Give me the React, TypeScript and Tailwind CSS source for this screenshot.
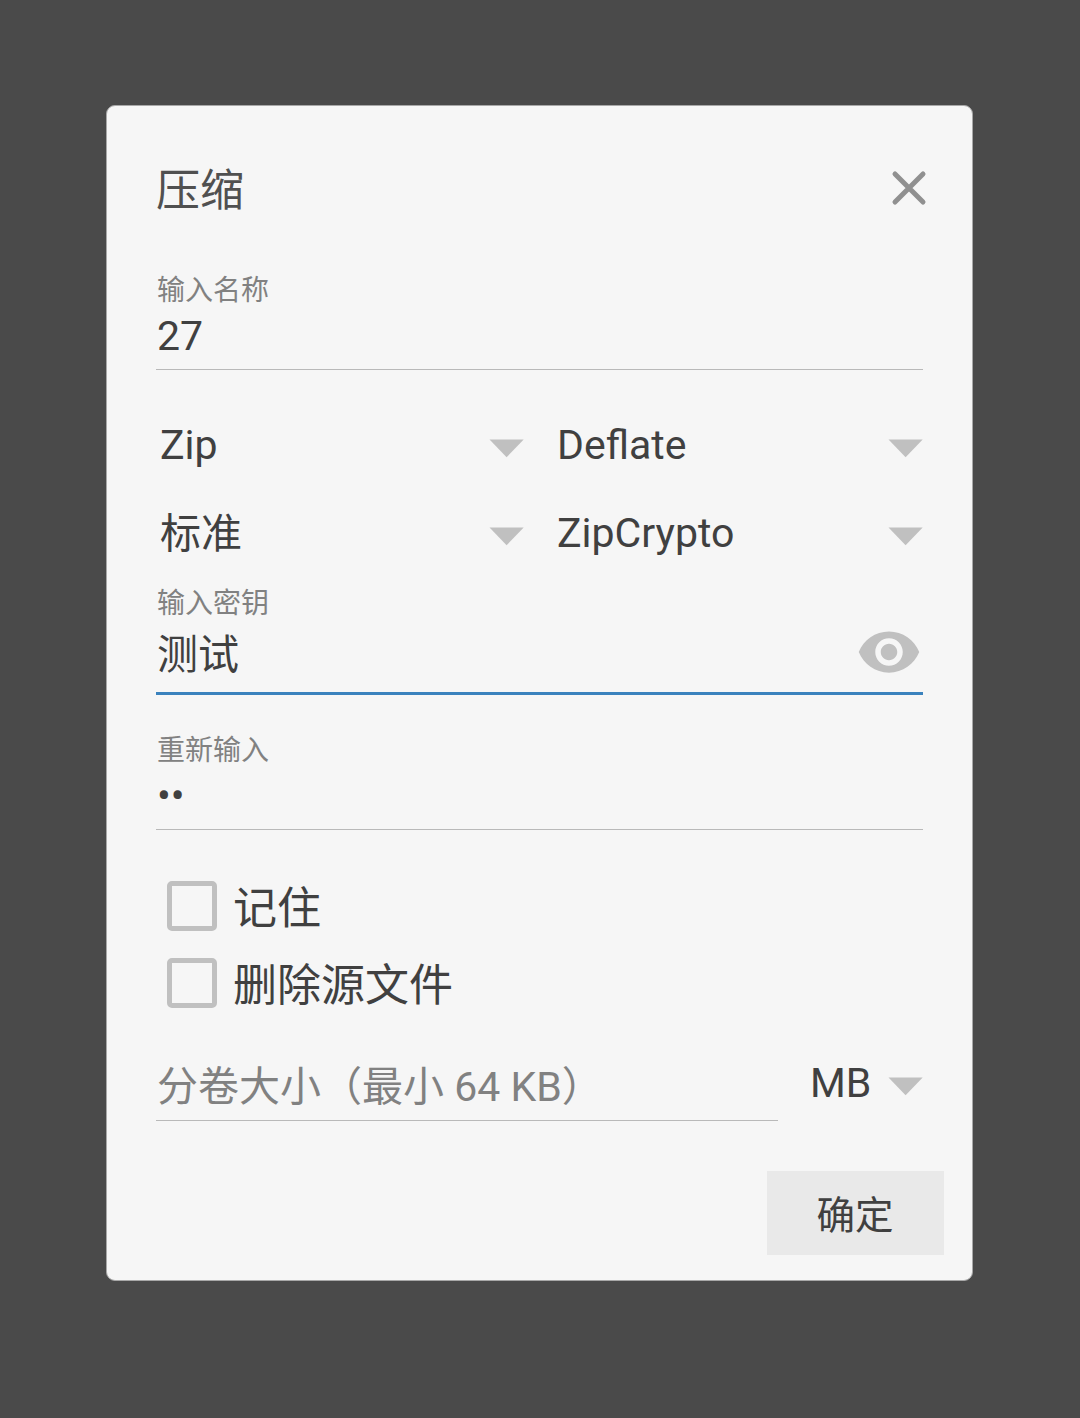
import React from "react";

function Arrow({ className = "" }: { className?: string }) {
  return (
    <svg className={`h-[19px] w-[35px] shrink-0 ${className}`} viewBox="0 0 35 19" fill="#c0c0c0">
      <path d="M0.5 0.5H34.7L17.6 18.2Z" />
    </svg>
  );
}

function Label({ children, className = "" }: { children: React.ReactNode; className?: string }) {
  return (
    <div className={`h-8 pl-px text-[28px] leading-[34px] text-[#818181] ${className}`}>{children}</div>
  );
}

function Spinner({ text, textClass = "" }: { text: string; textClass?: string }) {
  return (
    <div className="flex h-[88px] items-center justify-between">
      <span className={textClass}>{text}</span>
      <Arrow className="mt-[7px]" />
    </div>
  );
}

function CheckRow({ text }: { text: string }) {
  return (
    <div className="flex h-[77px] items-center pl-[11px]">
      <span className="mb-px size-[50px] rounded-[5px] border-5 border-[#c0c0c0]" />
      <span className="ml-[16px] pt-[5px] text-[44px] leading-[60px]">{text}</span>
    </div>
  );
}

export default function App() {
  return (
    <div
      lang="zh-CN"
      className="flex h-[1418px] w-[1080px] items-start bg-[#4a4a4a] pt-[105px] pl-[106px] font-[Roboto,'Noto_Sans_CJK_SC',sans-serif] text-[41px] leading-[60px] whitespace-nowrap text-[#404040]"
    >
      <div className="h-[1176px] w-[867px] rounded-[9px] border border-[#a8a8a8] bg-[#f6f6f6] pt-[55px] pr-[49px] pl-[49px]">
        <div className="flex h-14 items-center justify-between text-[44px] leading-[56px] text-[#505050]">
          <h1 className="pt-[3px]">压缩</h1>
          <svg
            className="mr-[-6px] size-10"
            viewBox="0 0 40 40"
            stroke="#909090"
            strokeWidth="5"
            strokeLinecap="round"
          >
            <path d="M6 5L34 33M34 5L6 33" />
          </svg>
        </div>

        <Label className="mt-[57px]">输入名称</Label>
        <div className="h-16 border-b border-[#b9b9b9] pl-px">27</div>

        <div className="mt-[31px] grid grid-cols-[364px_366px] gap-x-[33px] pl-[4px]">
          <Spinner text="Zip" />
          <Spinner text="Deflate" />
          <Spinner text="标准" textClass="pt-[2px]" />
          <Spinner text="ZipCrypto" />
        </div>

        <Label className="mt-[10px]">输入密钥</Label>
        <div className="flex h-[76px] items-start justify-between border-b-3 border-[#3a82bd] pl-px">
          <span className="leading-[72px]">测试</span>
          <svg className="mr-[1px] size-[66px]" viewBox="0 0 24 24" fill="#c0c0c0">
            <path d="M12 4.5C7 4.5 2.73 7.61 1 12c1.73 4.39 6 7.5 11 7.5s9.27-3.11 11-7.5c-1.73-4.39-6-7.5-11-7.5zM12 17c-2.76 0-5-2.24-5-5s2.24-5 5-5 5 2.24 5 5-2.24 5-5 5zm0-8c-1.66 0-3 1.34-3 3s1.34 3 3 3 3-1.34 3-3-1.34-3-3-3z" />
          </svg>
        </div>

        <Label className="mt-[39px]">重新输入</Label>
        <div className="h-16 border-b border-[#b9b9b9] pl-px">••</div>

        <div className="mt-[38px]">
          <CheckRow text="记住" />
          <CheckRow text="删除源文件" />
        </div>

        <div className="mt-[30px] flex h-[69px] items-start justify-between">
          <div className="h-[69px] w-[622px] border-b border-[#b9b9b9] pl-px leading-[70px] text-[#818181]">
            分卷大小（最小 64 KB）
          </div>
          <div className="flex h-[62px] w-[113px] items-center justify-between">
            <span>MB</span>
            <Arrow className="mt-[6px]" />
          </div>
        </div>

        <button className="mt-[50px] mr-[-21px] ml-auto flex h-[84px] w-[177px] items-center justify-center bg-[#e9e9e9] pt-[5px] pr-px text-[38.5px] leading-[56px]">
          确定
        </button>
      </div>
    </div>
  );
}
